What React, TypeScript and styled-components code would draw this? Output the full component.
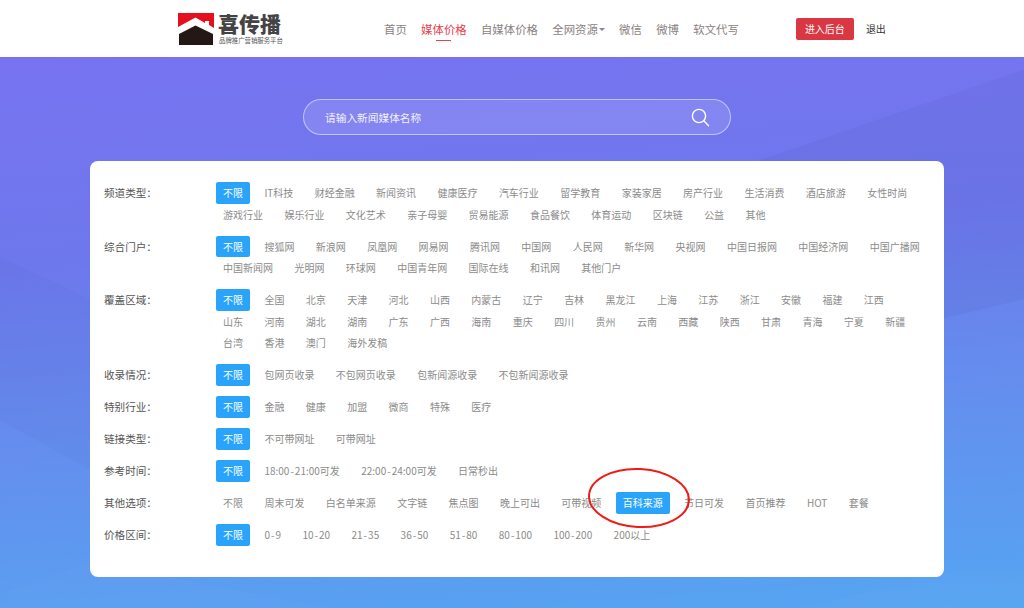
import React from "react";
import styled, { createGlobalStyle } from "styled-components";

const Global = createGlobalStyle`
  html, body { margin: 0; padding: 0; }
  body { font-family: "Noto Sans CJK SC", "Liberation Sans", sans-serif; }
`;

const Page = styled.div`
  position: relative;
  isolation: isolate;
  width: 1024px;
  height: 608px;
  overflow: hidden;
  background: linear-gradient(176deg, #7873f1 8%, #6d78ec 40%, #648fee 68%, #55a5f2 100%);
`;

const Facets = styled.svg`
  position: absolute;
  left: 0;
  top: 0;
  z-index: -1;
`;

const Header = styled.header`
  height: 57px;
  background: #fff;
  display: flex;
  align-items: center;
  padding-left: 178px;
`;

const Logo = styled.div`
  display: flex;
  align-items: flex-start;
  gap: 5px;
  width: 206px;
  height: 32px;
`;

const LogoWords = styled.div`
  display: flex;
  flex-direction: column;
`;

const LogoName = styled.span`
  font-size: 21px;
  line-height: 23px;
  margin: -1px 0 0 -1px;
  font-weight: 900;
  color: #444;
  white-space: nowrap;
`;

const LogoSub = styled.span`
  font-size: 6.4px;
  line-height: 9px;
  margin-top: 1px;
  color: #555;
  white-space: nowrap;
`;

const Nav = styled.nav`
  display: flex;
  gap: 14.3px;
`;

const NavItem = styled.a<{ $active?: boolean }>`
  position: relative;
  display: flex;
  align-items: center;
  font-size: 11.4px;
  line-height: 18px;
  color: ${(p) => (p.$active ? "#e8404c" : "#8a7f7f")};
  white-space: nowrap;
  ${(p) =>
    p.$active &&
    `&::after {
      content: "";
      position: absolute;
      left: 50%;
      bottom: -3px;
      width: 15px;
      height: 1px;
      margin-left: -7.5px;
      background: #e8404c;
    }`}
`;

const Caret = styled.i`
  width: 0;
  height: 0;
  margin-left: 1px;
  margin-top: 1px;
  border-left: 3px solid transparent;
  border-right: 3px solid transparent;
  border-top: 3px solid #888;
`;

const Actions = styled.div`
  display: flex;
  align-items: center;
  gap: 12px;
  margin-left: 57px;
`;

const AdminButton = styled.button`
  width: 58px;
  height: 22px;
  padding: 0;
  border: 0;
  border-radius: 2px;
  background: #d93742;
  color: #fff;
  font: 10px/22px "Noto Sans CJK SC", sans-serif;
`;

const Logout = styled.a`
  font-size: 10px;
  color: #333;
`;

const SearchWrap = styled.div`
  display: flex;
  padding: 42px 0 26px 303px;
`;

const SearchBox = styled.div`
  box-sizing: border-box;
  width: 428px;
  height: 36px;
  display: flex;
  align-items: center;
  justify-content: space-between;
  padding: 0 20px 0 21px;
  border: 1px solid rgba(255, 255, 255, 0.5);
  border-radius: 18px;
  background: rgba(255, 255, 255, 0.12);
  color: #f2f2ff;
  font-size: 10.7px;
`;

const Card = styled.section`
  box-sizing: border-box;
  width: 854px;
  height: 416px;
  margin-left: 90px;
  padding: 21px 14px 0;
  border-radius: 8px;
  background: #fff;
  display: flex;
  flex-direction: column;
  gap: 10.5px;
`;

const Row = styled.div`
  display: flex;
  align-items: flex-start;
`;

const Label = styled.div`
  flex: 0 0 112px;
  font-size: 10.6px;
  line-height: 21.5px;
  color: #555;
`;

const Tags = styled.div`
  flex: 1;
  display: flex;
  flex-wrap: wrap;
  column-gap: 7.4px;
`;

const Tag = styled.span<{ $active?: boolean }>`
  padding: 0 7px;
  height: 21.5px;
  border-radius: 2px;
  font-size: 10px;
  line-height: 21.5px;
  white-space: nowrap;
  color: ${(p) => (p.$active ? "#fff" : "#8b8b8b")};
  background: ${(p) => (p.$active ? "#2aa4fb" : "transparent")};
`;

const Hyphen = styled.span`
  margin: 0 1px;
`;

const Ring = styled.svg`
  position: absolute;
  left: 584px;
  top: 464px;
`;

const filters: { label: string; tags: string[]; active?: string }[] = [
  { label: "频道类型：", tags: ["不限","IT科技","财经金融","新闻资讯","健康医疗","汽车行业","留学教育","家装家居","房产行业","生活消费","酒店旅游","女性时尚","游戏行业","娱乐行业","文化艺术","亲子母婴","贸易能源","食品餐饮","体育运动","区块链","公益","其他"] },
  { label: "综合门户：", tags: ["不限","搜狐网","新浪网","凤凰网","网易网","腾讯网","中国网","人民网","新华网","央视网","中国日报网","中国经济网","中国广播网","中国新闻网","光明网","环球网","中国青年网","国际在线","和讯网","其他门户"] },
  { label: "覆盖区域：", tags: ["不限","全国","北京","天津","河北","山西","内蒙古","辽宁","吉林","黑龙江","上海","江苏","浙江","安徽","福建","江西","山东","河南","湖北","湖南","广东","广西","海南","重庆","四川","贵州","云南","西藏","陕西","甘肃","青海","宁夏","新疆","台湾","香港","澳门","海外发稿"] },
  { label: "收录情况：", tags: ["不限","包网页收录","不包网页收录","包新闻源收录","不包新闻源收录"] },
  { label: "特别行业：", tags: ["不限","金融","健康","加盟","微商","特殊","医疗"] },
  { label: "链接类型：", tags: ["不限","不可带网址","可带网址"] },
  { label: "参考时间：", tags: ["不限","18:00-21:00可发","22:00-24:00可发","日常秒出"] },
  { label: "其他选项：", active: "百科来源", tags: ["不限","周末可发","白名单来源","文字链","焦点图","晚上可出","可带视频","百科来源","节日可发","首页推荐","HOT","套餐"] },
  { label: "价格区间：", tags: ["不限","0-9","10-20","21-35","36-50","51-80","80-100","100-200","200以上"] },
];

function tagText(text: string) {
  const dash = text.indexOf("-");
  if (dash < 0) return text;
  return (
    <>
      {text.slice(0, dash)}
      <Hyphen>-</Hyphen>
      {text.slice(dash + 1)}
    </>
  );
}

export default function App() {
  return (
    <Page>
      <Global />
      <Facets width="1024" height="608" viewBox="0 0 1024 608">
        <polygon points="1024,299 944,318 760,160 1024,70" fill="rgba(30,40,110,0.05)" />
        <polygon points="0,257 90,299 90,470 0,420" fill="rgba(40,70,120,0.03)" />
        <polygon points="0,594 90,562 330,608 0,608" fill="rgba(255,255,255,0.02)" />
        <polygon points="1024,573 944,573 800,608 1024,608" fill="rgba(255,255,255,0.02)" />
      </Facets>
      <Header>
        <Logo>
          <svg width="36" height="32" viewBox="0 0 36 32">
            <path d="M0 0H36V15L31 12V8H27V10L17.5 4.5L0 14Z" fill="#e60f1e" />
            <path d="M1 21L17.5 12.5L35 21V32H1Z" fill="#231815" />
          </svg>
          <LogoWords>
            <LogoName>喜传播</LogoName>
            <LogoSub>品牌推广营销服务平台</LogoSub>
          </LogoWords>
        </Logo>
        <Nav>
          <NavItem>首页</NavItem>
          <NavItem $active>媒体价格</NavItem>
          <NavItem>自媒体价格</NavItem>
          <NavItem>全网资源<Caret /></NavItem>
          <NavItem>微信</NavItem>
          <NavItem>微博</NavItem>
          <NavItem>软文代写</NavItem>
        </Nav>
        <Actions>
          <AdminButton>进入后台</AdminButton>
          <Logout>退出</Logout>
        </Actions>
      </Header>
      <SearchWrap>
        <SearchBox>
          <span>请输入新闻媒体名称</span>
          <svg width="19" height="19" viewBox="0 0 19 19" fill="none" stroke="#fff" strokeWidth="1.4">
            <circle cx="8" cy="8" r="6.6" />
            <path d="M12.8 12.8L17.6 17.8" strokeLinecap="round" />
          </svg>
        </SearchBox>
      </SearchWrap>
      <Card>
        {filters.map((f) => {
          const active = f.active ?? "不限";
          return (
            <Row key={f.label}>
              <Label>{f.label}</Label>
              <Tags>
                {f.tags.map((t) => (
                  <Tag key={t} $active={t === active}>{tagText(t)}</Tag>
                ))}
              </Tags>
            </Row>
          );
        })}
      </Card>
      <Ring width="110" height="68" viewBox="0 0 110 68" fill="none">
        <ellipse cx="55" cy="34" rx="50" ry="29" stroke="#ee1c16" strokeWidth="2" transform="rotate(3 55 34)" />
      </Ring>
    </Page>
  );
}
